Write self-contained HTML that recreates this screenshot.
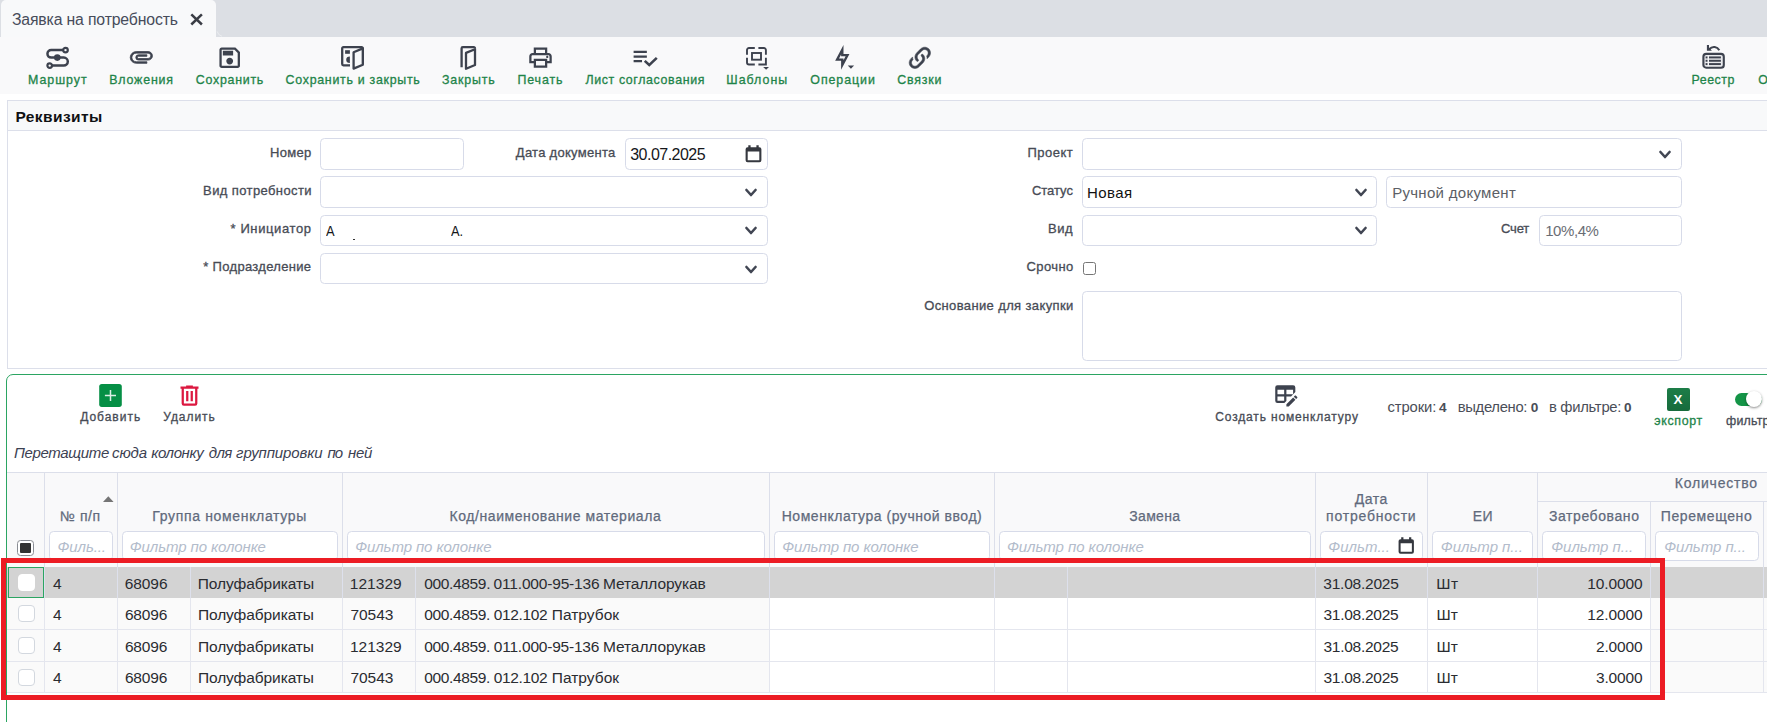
<!DOCTYPE html>
<html lang="ru"><head><meta charset="utf-8"><title>Заявка на потребность</title><style>
html,body{margin:0;padding:0;background:#fff;width:1767px;height:722px;overflow:hidden;}
#root{position:absolute;left:0;top:0;width:1767px;height:722px;overflow:hidden;background:#fff;font-family:"Liberation Sans",sans-serif;}
.t{position:absolute;white-space:pre;line-height:20px;height:20px;}
.in{position:absolute;border:1px solid #d7dbe9;border-radius:4.5px;}
svg{display:block}
</style></head><body><div id="root">
<div style="position:absolute;left:0;top:0;width:1767px;height:37px;background:#dcdfe4"></div>
<div style="position:absolute;left:1px;top:0;width:215px;height:37px;background:#f8f9fa;border-radius:5px 5px 0 0"></div><svg style="position:absolute;left:216px;top:30px" width="8" height="8" viewBox="0 0 8 8"><path d="M1.2 1.5 Q2 5.2 6 6.3" fill="none" stroke="#eceef1" stroke-width="0.9"/></svg>
<div style="position:absolute;left:0;top:37px;width:1767px;height:57px;background:#f9f9fa"></div>
<div class="t e0" style="left:11.88px;top:10.00px;font-size:15.8px;color:#474c5a;letter-spacing:-0.152px;">Заявка на потребность</div>
<svg style="position:absolute;left:188px;top:11px" width="17" height="17" viewBox="0 0 17 17"><path d="M3.3 3.3 L13.9 13.5 M13.9 3.3 L3.3 13.5" stroke="#3a3d45" stroke-width="2.5" fill="none"/></svg>
<svg style="position:absolute;left:46px;top:46px;overflow:visible" width="23" height="23" viewBox="0 0 23 23"><g fill="none" stroke="#3d424e" stroke-width="2.5">
<path d="M17.2 4.1 H5.2 a3.75 3.75 0 0 0 0 7.5 H17.8 a4 4 0 0 1 0 8 H6.0"/>
<circle cx="19.5" cy="4.1" r="2.3" stroke-width="2.2"/><circle cx="3.7" cy="19.6" r="2.3" stroke-width="2.2"/></g>
<circle cx="11.3" cy="11.6" r="3.3" fill="#3d424e"/></svg>
<div class="t e1" style="left:28.12px;top:70.00px;font-size:12.4px;color:#1e8449;-webkit-text-stroke:0.3px #1e8449;letter-spacing:0.954px;">Маршрут</div>
<svg style="position:absolute;left:128.15px;top:43.85px" width="26.7" height="25.8" viewBox="0 0 24 24" preserveAspectRatio="none"><path fill="#3d424e" stroke="#3d424e" stroke-width="0.7" d="M7.5,18A5.5,5.5 0 0,1 2,12.5A5.5,5.5 0 0,1 7.5,7H18A4,4 0 0,1 22,11A4,4 0 0,1 18,15H9.5A2.5,2.5 0 0,1 7,12.5A2.5,2.5 0 0,1 9.5,10H17V11.5H9.5A1,1 0 0,0 8.5,12.5A1,1 0 0,0 9.5,13.5H18A2.5,2.5 0 0,0 20.5,11A2.5,2.5 0 0,0 18,8.5H7.5A4,4 0 0,0 3.5,12.5A4,4 0 0,0 7.5,16.5H17V18H7.5Z"/></svg>
<div class="t e0" style="left:109.27px;top:70.00px;font-size:12.4px;color:#1e8449;-webkit-text-stroke:0.3px #1e8449;letter-spacing:0.815px;">Вложения</div>
<svg style="position:absolute;left:215.80px;top:43.80px" width="27.4" height="27.4" viewBox="0 0 24 24"><path fill="#3d424e" d="M17 3H5C3.89 3 3 3.9 3 5V19C3 20.1 3.89 21 5 21H19C20.1 21 21 20.1 21 19V7L17 3M19 19H5V5H16.17L19 7.83V19M12 12C10.34 12 9 13.34 9 15S10.34 18 12 18 15 16.66 15 15 13.66 12 12 12M6 6H15V10H6V6Z"/></svg>
<div class="t e1" style="left:195.80px;top:70.00px;font-size:12.4px;color:#1e8449;-webkit-text-stroke:0.3px #1e8449;letter-spacing:0.737px;">Сохранить</div>
<svg style="position:absolute;left:341px;top:46px;overflow:visible" width="24" height="24" viewBox="0 0 24 24"><g fill="none" stroke="#3d424e" stroke-width="2.3" stroke-linejoin="round">
<path d="M9.0 19.3 H2.4 a1.2 1.2 0 0 1 -1.2 -1.2 V2.4 a1.2 1.2 0 0 1 1.2 -1.2 H20.6 a1.2 1.2 0 0 1 1.2 1.2 V18.3"/>
<path d="M12.6 6.2 L21.8 2.4 V18.8 L12.6 22.6 Z" fill="#f8f9fa"/></g>
<rect x="4.1" y="4.2" width="4.8" height="3.6" fill="#3d424e"/><path d="M8.9 10.5 a3.7 3.2 0 0 0 0 6.4 Z" fill="#3d424e"/></svg>
<div class="t e0" style="left:285.60px;top:70.00px;font-size:12.4px;color:#1e8449;-webkit-text-stroke:0.3px #1e8449;letter-spacing:0.718px;">Сохранить и закрыть</div>
<svg style="position:absolute;left:460px;top:46px;overflow:visible" width="18" height="24" viewBox="0 0 18 24"><g fill="none" stroke="#3d424e" stroke-width="2.3" stroke-linejoin="round">
<path d="M1.6 21.2 V2.4 a1.2 1.2 0 0 1 1.2 -1.2 H13.8 a1.2 1.2 0 0 1 1.2 1.2"/>
<path d="M6.0 6.9 L15.0 3.2 V19.0 L6.0 22.8 Z"/></g></svg>
<div class="t e1" style="left:442.10px;top:70.00px;font-size:12.4px;color:#1e8449;-webkit-text-stroke:0.3px #1e8449;letter-spacing:0.794px;">Закрыть</div>
<svg style="position:absolute;left:527.00px;top:44.00px" width="27.0" height="27.0" viewBox="0 0 24 24"><path fill="#3d424e" d="M19 8C20.66 8 22 9.34 22 11V17H18V21H6V17H2V11C2 9.34 3.34 8 5 8H6V3H18V8H19M8 5V8H16V5H8M16 19V15H8V19H16M18 15H20V11C20 10.45 19.55 10 19 10H5C4.45 10 4 10.45 4 11V15H6V13H18V15M19 11.5C19 12.05 18.55 12.5 18 12.5S17 12.05 17 11.5 17.45 10.5 18 10.5 19 10.95 19 11.5Z"/></svg>
<div class="t e0" style="left:517.47px;top:70.00px;font-size:12.4px;color:#1e8449;-webkit-text-stroke:0.3px #1e8449;letter-spacing:0.865px;">Печать</div>
<svg style="position:absolute;left:629.6px;top:44.0px" width="28.9" height="27.35" viewBox="0 0 24 24" preserveAspectRatio="none"><path fill="#3d424e" d="M14 10H3v2h11v-2zm0-4H3v2h11V6zM3 16h7v-2H3v2zm18.5-4.5L23 13l-6.99 7-4.51-4.5L13 14l3.01 3 5.49-5.5z"/></svg>
<div class="t e1" style="left:585.40px;top:70.00px;font-size:12.4px;color:#1e8449;-webkit-text-stroke:0.3px #1e8449;letter-spacing:0.625px;">Лист согласования</div>
<svg style="position:absolute;left:746px;top:47px;overflow:visible" width="24" height="24" viewBox="0 0 24 24"><g fill="none" stroke="#3d424e" stroke-width="1.9" stroke-linecap="butt">
<path d="M8.8 1 H3 a2 2 0 0 0 -2 2 V7.7 M1 10.7 V15.5 a2 2 0 0 0 2 2 H8.8 M12.4 17.5 H19.9 V10.7 M19.9 7.7 V3 a2 2 0 0 0 -2 -2 H12.4"/>
<rect x="6.0" y="6.0" width="9.0" height="6.7"/></g>
<path d="M17.2 19.9 H23 L20.1 22.8 Z" fill="#3d424e"/></svg>
<div class="t e0" style="left:726.25px;top:70.00px;font-size:12.4px;color:#1e8449;-webkit-text-stroke:0.3px #1e8449;letter-spacing:1.024px;">Шаблоны</div>
<svg style="position:absolute;left:828.25px;top:44.05px" width="28.6" height="26.9" viewBox="0 0 24 24" preserveAspectRatio="none"><path fill="#3d424e" d="M11 9.47V11H14.76L13 14.53V13H9.24L11 9.47M13 1L6 15H11V23L18 9H13V1Z"/></svg>
<svg style="position:absolute;left:835px;top:45px;overflow:visible" width="20" height="25" viewBox="0 0 20 25"><path d="M12.8 20.4 H19.1 L15.95 23.8 Z" fill="#3d424e"/></svg>
<div class="t e1" style="left:810.30px;top:70.00px;font-size:12.4px;color:#1e8449;-webkit-text-stroke:0.3px #1e8449;letter-spacing:0.943px;">Операции</div>
<svg style="position:absolute;left:905.95px;top:43.65px" width="27.7" height="27.7" viewBox="0 0 24 24"><path fill="#3d424e" d="M10.59,13.41C11,13.8 11,14.44 10.59,14.83C10.2,15.22 9.56,15.22 9.17,14.83C7.22,12.88 7.22,9.71 9.17,7.76V7.76L12.71,4.22C14.66,2.27 17.83,2.27 19.78,4.22C21.73,6.17 21.73,9.34 19.78,11.29L18.29,12.78C18.3,11.96 18.17,11.14 17.89,10.36L18.36,9.88C19.54,8.71 19.54,6.81 18.36,5.64C17.19,4.46 15.29,4.46 14.12,5.64L10.59,9.17C9.41,10.34 9.41,12.24 10.59,13.41M13.41,9.17C13.8,8.78 14.44,8.78 14.83,9.17C16.78,11.12 16.78,14.29 14.83,16.24V16.24L11.29,19.78C9.34,21.73 6.17,21.73 4.22,19.78C2.27,17.83 2.27,14.66 4.22,12.71L5.71,11.22C5.7,12.04 5.83,12.86 6.11,13.65L5.64,14.12C4.46,15.29 4.46,17.19 5.64,18.36C6.81,19.54 8.71,19.54 9.88,18.36L13.41,14.83C14.59,13.66 14.59,11.76 13.41,10.59C13,10.2 13,9.56 13.41,9.17Z"/><path d="M10.59,13.41C11,13.8 11,14.44 10.59,14.83C10.2,15.22 9.56,15.22 9.17,14.83C7.22,12.88 7.22,9.71 9.17,7.76V7.76L12.71,4.22C14.66,2.27 17.83,2.27 19.78,4.22C21.73,6.17 21.73,9.34 19.78,11.29L18.29,12.78C18.3,11.96 18.17,11.14 17.89,10.36L18.36,9.88C19.54,8.71 19.54,6.81 18.36,5.64C17.19,4.46 15.29,4.46 14.12,5.64L10.59,9.17C9.41,10.34 9.41,12.24 10.59,13.41M13.41,9.17C13.8,8.78 14.44,8.78 14.83,9.17C16.78,11.12 16.78,14.29 14.83,16.24V16.24L11.29,19.78C9.34,21.73 6.17,21.73 4.22,19.78C2.27,17.83 2.27,14.66 4.22,12.71L5.71,11.22C5.7,12.04 5.83,12.86 6.11,13.65L5.64,14.12C4.46,15.29 4.46,17.19 5.64,18.36C6.81,19.54 8.71,19.54 9.88,18.36L13.41,14.83C14.59,13.66 14.59,11.76 13.41,10.59C13,10.2 13,9.56 13.41,9.17Z" fill="none" stroke="#3d424e" stroke-width="0.45"/></svg>
<div class="t e0" style="left:897.30px;top:70.00px;font-size:12.4px;color:#1e8449;-webkit-text-stroke:0.3px #1e8449;letter-spacing:0.813px;">Связки</div>
<svg style="position:absolute;left:1702px;top:44px;overflow:visible" width="24" height="26" viewBox="0 0 24 26"><rect x="1.4" y="9.9" width="20.4" height="13.8" rx="2.8" fill="#e9eaed" stroke="#3d424e" stroke-width="2.1"/>
<g fill="#3d424e"><rect x="6.9" y="12.45" width="12" height="1.95"/><rect x="6.9" y="15.8" width="12" height="1.95"/><rect x="6.9" y="19.1" width="12" height="1.95"/>
<rect x="3.6" y="12.45" width="2.0" height="1.95"/><rect x="3.6" y="15.8" width="2.0" height="1.95"/><rect x="3.6" y="19.1" width="2.0" height="1.95"/>
<path d="M4.9 0.9 H7.0 V3.4 L9.9 6.7 H4.9 Z"/></g>
<rect x="5.85" y="11.3" width="0.8" height="11" fill="#fff"/>
<path d="M7.2 5.2 C 10.6 1.6, 15.2 2.6, 17.3 6.3" fill="none" stroke="#3d424e" stroke-width="2.1"/></svg>
<div class="t e1" style="left:1691.51px;top:70.00px;font-size:12.4px;color:#1e8449;-webkit-text-stroke:0.3px #1e8449;letter-spacing:0.516px;">Реестр</div>
<div class="t e0" style="left:1758.30px;top:70.00px;font-size:12.4px;color:#1e8449;-webkit-text-stroke:0.3px #1e8449;">О</div>
<div style="position:absolute;left:7px;top:100px;width:1800px;height:267px;border:1px solid #dcdfea;background:#fff"></div>
<div style="position:absolute;left:8px;top:101px;width:1800px;height:29px;background:#f8f9fa;border-bottom:1px solid #dcdfea"></div>
<div class="t e1" style="left:15.48px;top:107.00px;font-size:15.5px;color:#101114;font-weight:700;letter-spacing:0.407px;">Реквизиты</div>
<div class="in" style="left:320px;top:137.7px;width:142.00px;height:30.10px;background:#fff"></div>
<div class="in" style="left:625px;top:137.7px;width:141.00px;height:30.10px;background:#fff"></div>
<div class="in" style="left:320px;top:176.1px;width:446.00px;height:30.00px;background:#fff"></div>
<div class="in" style="left:320px;top:214.6px;width:446.00px;height:29.70px;background:#fff"></div>
<div class="in" style="left:320px;top:252.6px;width:446.00px;height:29.40px;background:#fff"></div>
<div class="t e0" style="left:269.92px;top:143.00px;font-size:13px;color:#474b55;-webkit-text-stroke:0.3px #474b55;letter-spacing:0.347px;">Номер</div>
<div class="t e1" style="left:515.80px;top:143.00px;font-size:13px;color:#474b55;-webkit-text-stroke:0.3px #474b55;letter-spacing:0.285px;">Дата документа</div>
<div class="t e0" style="left:203.10px;top:181.00px;font-size:13px;color:#474b55;-webkit-text-stroke:0.3px #474b55;letter-spacing:0.391px;">Вид потребности</div>
<div class="t e1" style="left:230.50px;top:219.00px;font-size:13px;color:#474b55;-webkit-text-stroke:0.3px #474b55;letter-spacing:0.611px;">* Инициатор</div>
<div class="t e0" style="left:203.30px;top:257.00px;font-size:13px;color:#474b55;-webkit-text-stroke:0.3px #474b55;letter-spacing:0.307px;">* Подразделение</div>
<div class="t e1" style="left:630.20px;top:145.00px;font-size:16px;color:#15171b;letter-spacing:-0.514px;">30.07.2025</div>
<svg style="position:absolute;left:744.6px;top:144.6px" width="17.0" height="18.0" viewBox="0 0 17 18"><path fill="#35383f" d="M3.3 0.3 H5.6 V2.2 H11.4 V0.3 H13.7 V2.2 H14.4 A2 2 0 0 1 16.4 4.2 V15.3 A2 2 0 0 1 14.4 17.3 H2.6 A2 2 0 0 1 0.6 15.3 V4.2 A2 2 0 0 1 2.6 2.2 H3.3 Z M2.7 6.4 V15.2 H14.3 V6.4 Z"/></svg>
<svg style="position:absolute;left:744.05px;top:187.70px" width="14" height="10" viewBox="0 0 14 10"><path d="M2.45 2.0 L7 7.0 L11.55 2.0" fill="none" stroke="#414653" stroke-width="2.6" stroke-linecap="round" stroke-linejoin="round"/></svg>
<svg style="position:absolute;left:744.05px;top:226.10px" width="14" height="10" viewBox="0 0 14 10"><path d="M2.45 2.0 L7 7.0 L11.55 2.0" fill="none" stroke="#414653" stroke-width="2.6" stroke-linecap="round" stroke-linejoin="round"/></svg>
<svg style="position:absolute;left:744.05px;top:264.50px" width="14" height="10" viewBox="0 0 14 10"><path d="M2.45 2.0 L7 7.0 L11.55 2.0" fill="none" stroke="#414653" stroke-width="2.6" stroke-linecap="round" stroke-linejoin="round"/></svg>
<div class="t e0" style="left:325.90px;top:221.00px;font-size:15.3px;color:#15171b;transform:scaleX(.84);transform-origin:0 0;">А</div>
<div class="t e1" style="left:450.90px;top:221.00px;font-size:15.3px;color:#15171b;transform:scaleX(.84);transform-origin:0 0;">А.</div>
<div style="position:absolute;left:353px;top:238.6px;width:1.9px;height:1.3px;background:#333"></div>
<div class="in" style="left:1082px;top:137.7px;width:598.00px;height:30.10px;background:#fff"></div>
<div class="in" style="left:1082px;top:176.1px;width:293.00px;height:30.00px;background:#fff"></div>
<div class="in" style="left:1386px;top:176.1px;width:294.00px;height:30.00px;background:#fff"></div>
<div class="in" style="left:1082px;top:214.6px;width:293.00px;height:29.70px;background:#fff"></div>
<div class="in" style="left:1539px;top:214.6px;width:141.00px;height:29.70px;background:#fff"></div>
<div class="in" style="left:1082px;top:290.8px;width:598.00px;height:68.50px;background:#fff"></div>
<div class="t e0" style="left:1027.50px;top:143.00px;font-size:13px;color:#474b55;-webkit-text-stroke:0.3px #474b55;letter-spacing:0.464px;">Проект</div>
<div class="t e1" style="left:1031.88px;top:181.00px;font-size:13px;color:#474b55;-webkit-text-stroke:0.3px #474b55;letter-spacing:-0.012px;">Статус</div>
<div class="t e0" style="left:1048.12px;top:219.00px;font-size:13px;color:#474b55;-webkit-text-stroke:0.3px #474b55;letter-spacing:0.538px;">Вид</div>
<div class="t e1" style="left:1026.60px;top:257.00px;font-size:13px;color:#474b55;-webkit-text-stroke:0.3px #474b55;letter-spacing:0.393px;">Срочно</div>
<div class="t e0" style="left:924.20px;top:296.00px;font-size:13px;color:#474b55;-webkit-text-stroke:0.3px #474b55;letter-spacing:0.372px;">Основание для закупки</div>
<div class="t e1" style="left:1501.00px;top:219.00px;font-size:13px;color:#474b55;-webkit-text-stroke:0.3px #474b55;letter-spacing:-0.194px;">Счет</div>
<div class="t e0" style="left:1087.00px;top:183.00px;font-size:15px;color:#111;letter-spacing:0.415px;">Новая</div>
<div class="t e1" style="left:1392.13px;top:183.00px;font-size:15px;color:#5c5f66;letter-spacing:0.299px;">Ручной документ</div>
<div class="t e0" style="left:1545.17px;top:221.00px;font-size:15px;color:#6a6d74;letter-spacing:-0.425px;">10%,4%</div>
<svg style="position:absolute;left:1658.00px;top:150.30px" width="14" height="10" viewBox="0 0 14 10"><path d="M2.45 2.0 L7 7.0 L11.55 2.0" fill="none" stroke="#414653" stroke-width="2.6" stroke-linecap="round" stroke-linejoin="round"/></svg>
<svg style="position:absolute;left:1354.00px;top:187.70px" width="14" height="10" viewBox="0 0 14 10"><path d="M2.45 2.0 L7 7.0 L11.55 2.0" fill="none" stroke="#414653" stroke-width="2.6" stroke-linecap="round" stroke-linejoin="round"/></svg>
<svg style="position:absolute;left:1354.00px;top:226.10px" width="14" height="10" viewBox="0 0 14 10"><path d="M2.45 2.0 L7 7.0 L11.55 2.0" fill="none" stroke="#414653" stroke-width="2.6" stroke-linecap="round" stroke-linejoin="round"/></svg>
<div style="position:absolute;left:1083px;top:262px;width:11px;height:11px;border:1px solid #767676;border-radius:2.5px;background:#fff"></div>
<div style="position:absolute;left:6px;top:374px;width:1800px;height:400px;border:1px solid #2ba562;border-radius:7px 0 0 0;background:#fff"></div>
<svg style="position:absolute;left:99px;top:384px;overflow:visible" width="24" height="24" viewBox="0 0 24 24"><rect x="0.2" y="0" width="22.6" height="22.9" rx="2.6" fill="#058f45"/><path d="M11.5 6.1 V17.1 M5.9 11.6 H17.0" stroke="#fff" stroke-opacity=".86" stroke-width="1.5" fill="none"/></svg>
<div class="t e1" style="left:80.20px;top:407.00px;font-size:12px;color:#474b55;-webkit-text-stroke:0.3px #474b55;letter-spacing:0.993px;">Добавить</div>
<svg style="position:absolute;left:175.90px;top:382.10px" width="27" height="27" viewBox="0 0 24 24"><path fill="#dc1840" d="M9,3V4H4V6H5V19A2,2 0 0,0 7,21H17A2,2 0 0,0 19,19V6H20V4H15V3H9M7,6H17V19H7V6M9,8V17H11V8H9M13,8V17H15V8H13Z"/></svg>
<div class="t e0" style="left:163.30px;top:407.00px;font-size:12px;color:#474b55;-webkit-text-stroke:0.3px #474b55;letter-spacing:0.945px;">Удалить</div>
<svg style="position:absolute;left:1273.00px;top:382.50px" width="26.8" height="26.8" viewBox="0 0 24 24"><path fill="#3d424e" d="M21.7,13.35L20.7,14.35L18.65,12.3L19.65,11.3C19.86,11.08 20.21,11.08 20.42,11.3L21.7,12.58C21.92,12.79 21.92,13.14 21.7,13.35M12,18.94L18.07,12.88L20.12,14.93L14.06,21H12V18.94M4,2H18A2,2 0 0,1 20,4V8.17L16.17,12H12V16.17L10.17,18H4A2,2 0 0,1 2,16V4A2,2 0 0,1 4,2M4,6V10H10V6H4M12,6V10H18V6H12M4,12V16H10V12H4Z"/></svg>
<div class="t e1" style="left:1215.30px;top:407.00px;font-size:12px;color:#474b55;-webkit-text-stroke:0.3px #474b55;letter-spacing:0.841px;">Создать номенклатуру</div>
<div class="t e0" style="left:1387.42px;top:397.00px;font-size:14.8px;color:#4a4e58;letter-spacing:-0.084px;">строки:</div>
<div class="t e1" style="left:1439.00px;top:398.00px;font-size:13.6px;color:#4a4e58;font-weight:700;">4</div>
<div class="t e0" style="left:1457.74px;top:397.00px;font-size:14.8px;color:#4a4e58;letter-spacing:-0.321px;">выделено:</div>
<div class="t e1" style="left:1530.80px;top:398.00px;font-size:13.6px;color:#4a4e58;font-weight:700;">0</div>
<div class="t e0" style="left:1548.92px;top:397.00px;font-size:14.8px;color:#4a4e58;letter-spacing:-0.272px;">в фильтре:</div>
<div class="t e1" style="left:1624.10px;top:398.00px;font-size:13.6px;color:#4a4e58;font-weight:700;">0</div>
<div style="position:absolute;left:1667.2px;top:388px;width:22.8px;height:22.8px;background:linear-gradient(#1d7d48,#176b3c);border-radius:2px"></div>
<div class="t e0" style="left:1673.60px;top:390.00px;font-size:13.4px;color:#fff;font-weight:700;">X</div>
<div class="t e1" style="left:1654.30px;top:411.00px;font-size:12.4px;color:#1e8449;-webkit-text-stroke:0.3px #1e8449;letter-spacing:0.636px;">экспорт</div>
<div style="position:absolute;left:1735px;top:393px;width:27px;height:13.4px;border-radius:7px;background:#149447"></div>
<div style="position:absolute;left:1746.3px;top:391.4px;width:16px;height:16px;border-radius:8px;background:#fff;box-shadow:0 1px 2.5px rgba(0,0,0,.45)"></div>
<div class="t e0" style="left:1726.00px;top:411.00px;font-size:12.4px;color:#474b55;-webkit-text-stroke:0.3px #474b55;letter-spacing:0.199px;">фильтр</div>
<div class="t e1" style="left:14.00px;top:443.00px;font-size:15px;color:#3c4152;font-style:italic;letter-spacing:-0.341px;">Перетащите</div>
<div class="t e0" style="left:111.94px;top:443.00px;font-size:15px;color:#3c4152;font-style:italic;letter-spacing:-0.057px;">сюда</div>
<div class="t e1" style="left:151.20px;top:443.00px;font-size:15px;color:#3c4152;font-style:italic;letter-spacing:-0.372px;">колонку</div>
<div class="t e0" style="left:208.70px;top:443.00px;font-size:15px;color:#3c4152;font-style:italic;letter-spacing:-0.546px;">для</div>
<div class="t e1" style="left:236.10px;top:443.00px;font-size:15px;color:#3c4152;font-style:italic;letter-spacing:-0.105px;">группировки</div>
<div class="t e0" style="left:327.60px;top:443.00px;font-size:15px;color:#3c4152;font-style:italic;letter-spacing:-1.209px;">по</div>
<div class="t e1" style="left:347.90px;top:443.00px;font-size:15px;color:#3c4152;font-style:italic;letter-spacing:-0.208px;">ней</div>
<div style="position:absolute;left:7px;top:472px;width:1800px;height:94px;background:#f9f9fa;border-top:1px solid #dcdfea"></div>
<div style="position:absolute;left:44px;top:472px;width:1px;height:95px;background:#dcdfea"></div>
<div style="position:absolute;left:117px;top:472px;width:1px;height:95px;background:#dcdfea"></div>
<div style="position:absolute;left:342px;top:472px;width:1px;height:95px;background:#dcdfea"></div>
<div style="position:absolute;left:769px;top:472px;width:1px;height:95px;background:#dcdfea"></div>
<div style="position:absolute;left:994px;top:472px;width:1px;height:95px;background:#dcdfea"></div>
<div style="position:absolute;left:1315px;top:472px;width:1px;height:95px;background:#dcdfea"></div>
<div style="position:absolute;left:1427px;top:472px;width:1px;height:95px;background:#dcdfea"></div>
<div style="position:absolute;left:1537px;top:472px;width:1px;height:95px;background:#dcdfea"></div>
<div style="position:absolute;left:1650px;top:501px;width:1px;height:66px;background:#dcdfea"></div>
<div style="position:absolute;left:1763px;top:501px;width:1px;height:66px;background:#dcdfea"></div>
<div style="position:absolute;left:1538px;top:501px;width:300px;height:1px;background:#dcdfea"></div>
<div class="t e0" style="left:59.92px;top:506.00px;font-size:14px;color:#616a7c;-webkit-text-stroke:0.25px #616a7c;letter-spacing:0.553px;">№ п/п</div>
<div class="t e1" style="left:152.21px;top:506.00px;font-size:14px;color:#616a7c;-webkit-text-stroke:0.25px #616a7c;letter-spacing:0.668px;">Группа номенклатуры</div>
<div class="t e0" style="left:449.45px;top:506.00px;font-size:14px;color:#616a7c;-webkit-text-stroke:0.25px #616a7c;letter-spacing:0.582px;">Код/наименование материала</div>
<div class="t e1" style="left:781.72px;top:506.00px;font-size:14px;color:#616a7c;-webkit-text-stroke:0.25px #616a7c;letter-spacing:0.534px;">Номенклатура (ручной ввод)</div>
<div class="t e0" style="left:1129.30px;top:506.00px;font-size:14px;color:#616a7c;-webkit-text-stroke:0.25px #616a7c;letter-spacing:0.306px;">Замена</div>
<div class="t e1" style="left:1354.70px;top:489.00px;font-size:14px;color:#616a7c;-webkit-text-stroke:0.25px #616a7c;letter-spacing:0.495px;">Дата</div>
<div class="t e0" style="left:1326.10px;top:506.00px;font-size:14px;color:#616a7c;-webkit-text-stroke:0.25px #616a7c;letter-spacing:0.792px;">потребности</div>
<div class="t e1" style="left:1472.65px;top:506.00px;font-size:14px;color:#616a7c;-webkit-text-stroke:0.25px #616a7c;letter-spacing:0.606px;">ЕИ</div>
<div class="t e0" style="left:1548.91px;top:506.00px;font-size:14px;color:#616a7c;-webkit-text-stroke:0.25px #616a7c;letter-spacing:0.588px;">Затребовано</div>
<div class="t e1" style="left:1660.74px;top:506.00px;font-size:14px;color:#616a7c;-webkit-text-stroke:0.25px #616a7c;letter-spacing:0.606px;">Перемещено</div>
<div class="t e0" style="left:1674.72px;top:473.00px;font-size:14px;color:#616a7c;-webkit-text-stroke:0.25px #616a7c;letter-spacing:0.805px;">Количество</div>
<svg style="position:absolute;left:102.8px;top:496.2px" width="11" height="6" viewBox="0 0 11 6"><path d="M0 6 L5.3 0.2 L10.6 6 Z" fill="#757575"/></svg>
<div class="in" style="left:49px;top:531px;width:62.00px;height:28.00px;background:#fff"></div>
<div class="t e1" style="left:57.42px;top:537.00px;font-size:15px;color:#b3bccb;font-style:italic;letter-spacing:-0.085px;">Филь...</div>
<div class="in" style="left:122px;top:531px;width:214.00px;height:28.00px;background:#fff"></div>
<div class="t e0" style="left:129.77px;top:537.00px;font-size:15px;color:#b3bccb;font-style:italic;letter-spacing:-0.100px;">Фильтр по колонке</div>
<div class="in" style="left:347px;top:531px;width:416.00px;height:28.00px;background:#fff"></div>
<div class="t e1" style="left:355.15px;top:537.00px;font-size:15px;color:#b3bccb;font-style:italic;letter-spacing:-0.091px;">Фильтр по колонке</div>
<div class="in" style="left:774px;top:531px;width:214.00px;height:28.00px;background:#fff"></div>
<div class="t e0" style="left:782.15px;top:537.00px;font-size:15px;color:#b3bccb;font-style:italic;letter-spacing:-0.091px;">Фильтр по колонке</div>
<div class="in" style="left:999px;top:531px;width:310.00px;height:28.00px;background:#fff"></div>
<div class="t e1" style="left:1006.97px;top:537.00px;font-size:15px;color:#b3bccb;font-style:italic;letter-spacing:-0.057px;">Фильтр по колонке</div>
<div class="in" style="left:1320px;top:531px;width:101.00px;height:28.00px;background:#fff"></div>
<div class="t e0" style="left:1328.15px;top:537.00px;font-size:15px;color:#b3bccb;font-style:italic;letter-spacing:0.062px;">Фильт...</div>
<div class="in" style="left:1432px;top:531px;width:99.00px;height:28.00px;background:#fff"></div>
<div class="t e1" style="left:1440.77px;top:537.00px;font-size:15px;color:#b3bccb;font-style:italic;letter-spacing:-0.014px;">Фильтр п...</div>
<div class="in" style="left:1542px;top:531px;width:102.00px;height:28.00px;background:#fff"></div>
<div class="t e0" style="left:1551.15px;top:537.00px;font-size:15px;color:#b3bccb;font-style:italic;letter-spacing:-0.013px;">Фильтр п...</div>
<div class="in" style="left:1655px;top:531px;width:102.00px;height:28.00px;background:#fff"></div>
<div class="t e1" style="left:1664.22px;top:537.00px;font-size:15px;color:#b3bccb;font-style:italic;letter-spacing:-0.040px;">Фильтр п...</div>
<svg style="position:absolute;left:1398px;top:536.6px" width="16.49" height="17.46" viewBox="0 0 17 18"><path fill="#35383f" d="M3.3 0.3 H5.6 V2.2 H11.4 V0.3 H13.7 V2.2 H14.4 A2 2 0 0 1 16.4 4.2 V15.3 A2 2 0 0 1 14.4 17.3 H2.6 A2 2 0 0 1 0.6 15.3 V4.2 A2 2 0 0 1 2.6 2.2 H3.3 Z M2.7 6.4 V15.2 H14.3 V6.4 Z"/></svg>
<div style="position:absolute;left:17px;top:540px;width:15px;height:14px;border:1px solid #8a8d94;border-radius:3.5px;background:#fff"></div>
<div style="position:absolute;left:20.3px;top:543px;width:10.4px;height:10px;background:#333;border-radius:1px"></div>
<div style="position:absolute;left:7px;top:567px;width:1800px;height:31px;background:#d3d3d3"></div>
<div style="position:absolute;left:44px;top:567px;width:1px;height:31px;background:#dde0ec"></div>
<div style="position:absolute;left:117px;top:567px;width:1px;height:31px;background:#dde0ec"></div>
<div style="position:absolute;left:190px;top:567px;width:1px;height:31px;background:#dde0ec"></div>
<div style="position:absolute;left:342px;top:567px;width:1px;height:31px;background:#dde0ec"></div>
<div style="position:absolute;left:415px;top:567px;width:1px;height:31px;background:#dde0ec"></div>
<div style="position:absolute;left:769px;top:567px;width:1px;height:31px;background:#dde0ec"></div>
<div style="position:absolute;left:994px;top:567px;width:1px;height:31px;background:#dde0ec"></div>
<div style="position:absolute;left:1067px;top:567px;width:1px;height:31px;background:#dde0ec"></div>
<div style="position:absolute;left:1315px;top:567px;width:1px;height:31px;background:#dde0ec"></div>
<div style="position:absolute;left:1427px;top:567px;width:1px;height:31px;background:#dde0ec"></div>
<div style="position:absolute;left:1537px;top:567px;width:1px;height:31px;background:#dde0ec"></div>
<div style="position:absolute;left:1650px;top:567px;width:1px;height:31px;background:#dde0ec"></div>
<div style="position:absolute;left:1763px;top:567px;width:1px;height:31px;background:#dde0ec"></div>
<div style="position:absolute;left:8px;top:567px;width:34px;height:29px;border:1px solid #2ba562"></div>
<div style="position:absolute;left:18px;top:574px;width:15px;height:15px;border:1px solid #fff;border-radius:4px;background:#fff"></div>
<div class="t e0" style="left:52.90px;top:574.00px;font-size:15.5px;color:#2a2c31;">4</div>
<div class="t e1" style="left:124.73px;top:574.00px;font-size:15.5px;color:#2a2c31;letter-spacing:-0.074px;">68096</div>
<div class="t e0" style="left:197.76px;top:574.00px;font-size:15.5px;color:#2a2c31;letter-spacing:-0.065px;">Полуфабрикаты</div>
<div class="t e1" style="left:349.81px;top:574.00px;font-size:15.5px;color:#2a2c31;letter-spacing:0.042px;">121329</div>
<div class="t e0" style="left:424.30px;top:574.00px;font-size:15.5px;color:#2a2c31;letter-spacing:-0.352px;">000.4859.</div>
<div class="t e1" style="left:493.60px;top:574.00px;font-size:15.5px;color:#2a2c31;letter-spacing:-0.180px;">011.000-95-136</div>
<div class="t e0" style="left:602.92px;top:574.00px;font-size:15.5px;color:#2a2c31;letter-spacing:-0.080px;">Металлорукав</div>
<div class="t e1" style="left:1323.32px;top:574.00px;font-size:15.5px;color:#2a2c31;letter-spacing:-0.223px;">31.08.2025</div>
<div class="t e0" style="left:1436.33px;top:574.00px;font-size:15.5px;color:#2a2c31;letter-spacing:0.354px;">Шт</div>
<div class="t e1" style="left:1587.19px;top:574.00px;font-size:15.5px;color:#2a2c31;letter-spacing:-0.093px;">10.0000</div>
<div style="position:absolute;left:7px;top:598px;width:762px;height:32px;background:#fafafa"></div>
<div style="position:absolute;left:1651px;top:598px;width:200px;height:32px;background:#fafafa"></div>
<div style="position:absolute;left:7px;top:629px;width:1800px;height:1px;background:#e4e6ee"></div>
<div style="position:absolute;left:44px;top:598px;width:1px;height:32px;background:#e4e6ee"></div>
<div style="position:absolute;left:117px;top:598px;width:1px;height:32px;background:#e4e6ee"></div>
<div style="position:absolute;left:190px;top:598px;width:1px;height:32px;background:#e4e6ee"></div>
<div style="position:absolute;left:342px;top:598px;width:1px;height:32px;background:#e4e6ee"></div>
<div style="position:absolute;left:415px;top:598px;width:1px;height:32px;background:#e4e6ee"></div>
<div style="position:absolute;left:769px;top:598px;width:1px;height:32px;background:#e4e6ee"></div>
<div style="position:absolute;left:994px;top:598px;width:1px;height:32px;background:#e4e6ee"></div>
<div style="position:absolute;left:1067px;top:598px;width:1px;height:32px;background:#e4e6ee"></div>
<div style="position:absolute;left:1315px;top:598px;width:1px;height:32px;background:#e4e6ee"></div>
<div style="position:absolute;left:1427px;top:598px;width:1px;height:32px;background:#e4e6ee"></div>
<div style="position:absolute;left:1537px;top:598px;width:1px;height:32px;background:#e4e6ee"></div>
<div style="position:absolute;left:1650px;top:598px;width:1px;height:32px;background:#e4e6ee"></div>
<div style="position:absolute;left:1763px;top:598px;width:1px;height:32px;background:#e4e6ee"></div>
<div style="position:absolute;left:18px;top:605px;width:15px;height:15px;border:1px solid #d3d8df;border-radius:4px;background:#fff"></div>
<div class="t e0" style="left:52.90px;top:605.00px;font-size:15.5px;color:#2a2c31;">4</div>
<div class="t e1" style="left:124.90px;top:605.00px;font-size:15.5px;color:#2a2c31;letter-spacing:-0.151px;">68096</div>
<div class="t e0" style="left:197.94px;top:605.00px;font-size:15.5px;color:#2a2c31;letter-spacing:-0.095px;">Полуфабрикаты</div>
<div class="t e1" style="left:350.38px;top:605.00px;font-size:15.5px;color:#2a2c31;">70543</div>
<div class="t e0" style="left:424.30px;top:605.00px;font-size:15.5px;color:#2a2c31;letter-spacing:-0.381px;">000.4859.</div>
<div class="t e1" style="left:493.79px;top:605.00px;font-size:15.5px;color:#2a2c31;letter-spacing:-0.382px;">012.102</div>
<div class="t e0" style="left:551.71px;top:605.00px;font-size:15.5px;color:#2a2c31;letter-spacing:0.036px;">Патрубок</div>
<div class="t e1" style="left:1323.41px;top:605.00px;font-size:15.5px;color:#2a2c31;letter-spacing:-0.252px;">31.08.2025</div>
<div class="t e0" style="left:1436.42px;top:605.00px;font-size:15.5px;color:#2a2c31;letter-spacing:0.162px;">Шт</div>
<div class="t e1" style="left:1587.28px;top:605.00px;font-size:15.5px;color:#2a2c31;letter-spacing:-0.124px;">12.0000</div>
<div style="position:absolute;left:7px;top:630px;width:762px;height:32px;background:#fafafa"></div>
<div style="position:absolute;left:1651px;top:630px;width:200px;height:32px;background:#fafafa"></div>
<div style="position:absolute;left:7px;top:661px;width:1800px;height:1px;background:#e4e6ee"></div>
<div style="position:absolute;left:44px;top:630px;width:1px;height:32px;background:#e4e6ee"></div>
<div style="position:absolute;left:117px;top:630px;width:1px;height:32px;background:#e4e6ee"></div>
<div style="position:absolute;left:190px;top:630px;width:1px;height:32px;background:#e4e6ee"></div>
<div style="position:absolute;left:342px;top:630px;width:1px;height:32px;background:#e4e6ee"></div>
<div style="position:absolute;left:415px;top:630px;width:1px;height:32px;background:#e4e6ee"></div>
<div style="position:absolute;left:769px;top:630px;width:1px;height:32px;background:#e4e6ee"></div>
<div style="position:absolute;left:994px;top:630px;width:1px;height:32px;background:#e4e6ee"></div>
<div style="position:absolute;left:1067px;top:630px;width:1px;height:32px;background:#e4e6ee"></div>
<div style="position:absolute;left:1315px;top:630px;width:1px;height:32px;background:#e4e6ee"></div>
<div style="position:absolute;left:1427px;top:630px;width:1px;height:32px;background:#e4e6ee"></div>
<div style="position:absolute;left:1537px;top:630px;width:1px;height:32px;background:#e4e6ee"></div>
<div style="position:absolute;left:1650px;top:630px;width:1px;height:32px;background:#e4e6ee"></div>
<div style="position:absolute;left:1763px;top:630px;width:1px;height:32px;background:#e4e6ee"></div>
<div style="position:absolute;left:18px;top:637px;width:15px;height:15px;border:1px solid #d3d8df;border-radius:4px;background:#fff"></div>
<div class="t e0" style="left:52.90px;top:637.00px;font-size:15.5px;color:#2a2c31;">4</div>
<div class="t e1" style="left:124.90px;top:637.00px;font-size:15.5px;color:#2a2c31;letter-spacing:-0.151px;">68096</div>
<div class="t e0" style="left:197.94px;top:637.00px;font-size:15.5px;color:#2a2c31;letter-spacing:-0.095px;">Полуфабрикаты</div>
<div class="t e1" style="left:349.99px;top:637.00px;font-size:15.5px;color:#2a2c31;letter-spacing:-0.015px;">121329</div>
<div class="t e0" style="left:424.30px;top:637.00px;font-size:15.5px;color:#2a2c31;letter-spacing:-0.381px;">000.4859.</div>
<div class="t e1" style="left:493.79px;top:637.00px;font-size:15.5px;color:#2a2c31;letter-spacing:-0.208px;">011.000-95-136</div>
<div class="t e0" style="left:603.09px;top:637.00px;font-size:15.5px;color:#2a2c31;letter-spacing:-0.107px;">Металлорукав</div>
<div class="t e1" style="left:1323.41px;top:637.00px;font-size:15.5px;color:#2a2c31;letter-spacing:-0.252px;">31.08.2025</div>
<div class="t e0" style="left:1436.42px;top:637.00px;font-size:15.5px;color:#2a2c31;letter-spacing:0.162px;">Шт</div>
<div class="t e1" style="left:1596.06px;top:637.00px;font-size:15.5px;color:#2a2c31;letter-spacing:-0.182px;">2.0000</div>
<div style="position:absolute;left:7px;top:662px;width:762px;height:31px;background:#fafafa"></div>
<div style="position:absolute;left:1651px;top:662px;width:200px;height:31px;background:#fafafa"></div>
<div style="position:absolute;left:7px;top:692px;width:1800px;height:1px;background:#e4e6ee"></div>
<div style="position:absolute;left:44px;top:662px;width:1px;height:31px;background:#e4e6ee"></div>
<div style="position:absolute;left:117px;top:662px;width:1px;height:31px;background:#e4e6ee"></div>
<div style="position:absolute;left:190px;top:662px;width:1px;height:31px;background:#e4e6ee"></div>
<div style="position:absolute;left:342px;top:662px;width:1px;height:31px;background:#e4e6ee"></div>
<div style="position:absolute;left:415px;top:662px;width:1px;height:31px;background:#e4e6ee"></div>
<div style="position:absolute;left:769px;top:662px;width:1px;height:31px;background:#e4e6ee"></div>
<div style="position:absolute;left:994px;top:662px;width:1px;height:31px;background:#e4e6ee"></div>
<div style="position:absolute;left:1067px;top:662px;width:1px;height:31px;background:#e4e6ee"></div>
<div style="position:absolute;left:1315px;top:662px;width:1px;height:31px;background:#e4e6ee"></div>
<div style="position:absolute;left:1427px;top:662px;width:1px;height:31px;background:#e4e6ee"></div>
<div style="position:absolute;left:1537px;top:662px;width:1px;height:31px;background:#e4e6ee"></div>
<div style="position:absolute;left:1650px;top:662px;width:1px;height:31px;background:#e4e6ee"></div>
<div style="position:absolute;left:1763px;top:662px;width:1px;height:31px;background:#e4e6ee"></div>
<div style="position:absolute;left:18px;top:669px;width:15px;height:15px;border:1px solid #d3d8df;border-radius:4px;background:#fff"></div>
<div class="t e0" style="left:52.90px;top:668.00px;font-size:15.5px;color:#2a2c31;">4</div>
<div class="t e1" style="left:124.90px;top:668.00px;font-size:15.5px;color:#2a2c31;letter-spacing:-0.151px;">68096</div>
<div class="t e0" style="left:197.94px;top:668.00px;font-size:15.5px;color:#2a2c31;letter-spacing:-0.095px;">Полуфабрикаты</div>
<div class="t e1" style="left:350.38px;top:668.00px;font-size:15.5px;color:#2a2c31;">70543</div>
<div class="t e0" style="left:424.30px;top:668.00px;font-size:15.5px;color:#2a2c31;letter-spacing:-0.381px;">000.4859.</div>
<div class="t e1" style="left:493.79px;top:668.00px;font-size:15.5px;color:#2a2c31;letter-spacing:-0.382px;">012.102</div>
<div class="t e0" style="left:551.71px;top:668.00px;font-size:15.5px;color:#2a2c31;letter-spacing:0.036px;">Патрубок</div>
<div class="t e1" style="left:1323.41px;top:668.00px;font-size:15.5px;color:#2a2c31;letter-spacing:-0.252px;">31.08.2025</div>
<div class="t e0" style="left:1436.42px;top:668.00px;font-size:15.5px;color:#2a2c31;letter-spacing:0.162px;">Шт</div>
<div class="t e1" style="left:1596.02px;top:668.00px;font-size:15.5px;color:#2a2c31;letter-spacing:-0.174px;">3.0000</div>
<div style="position:absolute;left:1px;top:558px;width:1654px;height:132px;border:5px solid #ec1c24"></div>
</div></body></html>
